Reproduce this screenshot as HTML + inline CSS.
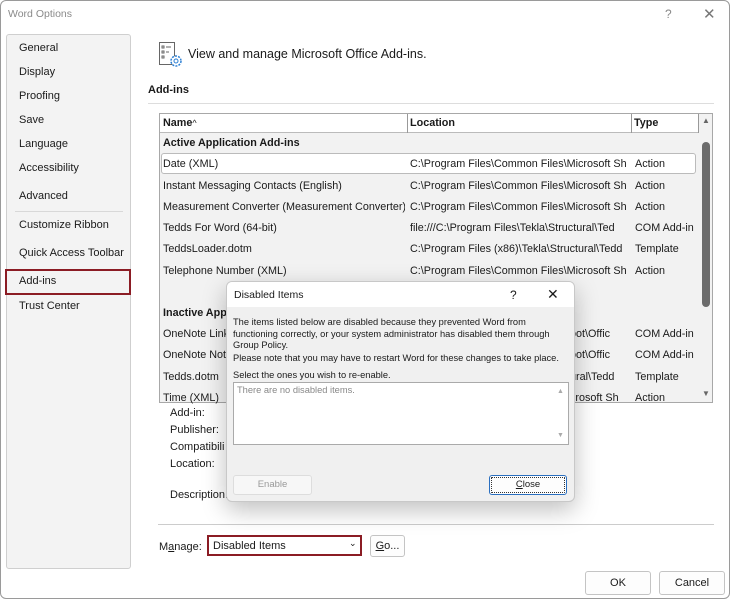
<!DOCTYPE html>
<html><head><style>
*{margin:0;padding:0;box-sizing:border-box}
body{width:730px;height:599px;background:#fff;font-family:"Liberation Sans",Arial,sans-serif;font-size:11px;color:#1a1a1a;position:relative;overflow:hidden}
.a{position:absolute;white-space:nowrap}
.win{position:absolute;left:0;top:0;width:730px;height:599px;border:1px solid #9a9a9a;border-radius:6px;background:#fff}
.nav{position:absolute;left:5px;top:33px;width:125px;height:535px;background:#f3f3f3;border:1px solid #cfcfcf;border-radius:3px}
.nav div{position:absolute;left:12px;font-size:11px}
.tbl{position:absolute;left:158px;top:112px;width:554px;height:290px;background:#f2f2f2;border:1px solid #a8a8a8;font-size:10.8px}
.l{width:220px;overflow:hidden}
.btn{position:absolute;background:#fdfdfd;border:1px solid #c4c4c4;border-radius:3px;text-align:center;font-size:11px}
</style></head><body>
<div class="win">
<div class="a" style="left:7px;top:7px;color:#8a8a8a;font-size:10.5px">Word Options</div>
<div class="a" style="left:664px;top:6px;color:#888;font-size:12px">?</div>
<div class="a" style="left:702px;top:4px;color:#777;font-size:15px">✕</div>
<div class="nav">
<div style="top:7px">General</div><div style="top:31px">Display</div><div style="top:55px">Proofing</div><div style="top:79px">Save</div><div style="top:103px">Language</div><div style="top:127px">Accessibility</div><div style="top:155px">Advanced</div>
<div style="top:176px;left:8px;width:108px;border-top:1px solid #d8d8d8"></div>
<div style="top:184px">Customize Ribbon</div><div style="top:212px">Quick Access Toolbar</div>
<div style="top:234px;left:-2px;width:126px;height:26px;border:2px solid #8b1c24;background:#f3f3f3"></div>
<div style="top:240px">Add-ins</div>
<div style="top:265px">Trust Center</div>
</div>
<svg class="a" style="left:157px;top:40px" width="26" height="28" viewBox="0 0 26 28"><rect x="1.5" y="1.5" width="15" height="22" fill="#fff" stroke="#666"/><g stroke="#666"><rect x="4" y="5" width="2" height="2" fill="none"/><line x1="8" y1="6" x2="13" y2="6"/><rect x="4" y="10" width="2" height="2" fill="none"/><line x1="8" y1="11" x2="11" y2="11"/><rect x="4" y="15" width="2" height="2" fill="none"/></g><circle cx="18" cy="20" r="5" fill="#fff" stroke="#2b7fd4" stroke-width="1.5" stroke-dasharray="2 1.2"/><circle cx="18" cy="20" r="2" fill="none" stroke="#2b7fd4"/></svg>
<div class="a" style="left:187px;top:46px;font-size:12.5px">View and manage Microsoft Office Add-ins.</div>
<div class="a" style="left:147px;top:83px;font-weight:bold;font-size:11px">Add-ins</div>
<div class="a" style="left:147px;top:102px;width:566px;border-top:1px solid #ddd"></div>
<div class="tbl">
<div class="a" style="left:0;top:0;width:538px;height:19px;background:#fff;border-bottom:1px solid #bbb"></div>
<div class="a" style="left:247px;top:0;height:19px;border-left:1px solid #999"></div>
<div class="a" style="left:471px;top:0;height:19px;border-left:1px solid #999"></div>
<div class="a" style="left:538px;top:0;height:19px;border-left:1px solid #999"></div>
<div class="a" style="left:3px;top:3px;font-weight:bold">Name<span style="font-weight:normal;font-size:9px">^</span></div>
<div class="a" style="left:250px;top:3px;font-weight:bold">Location</div>
<div class="a" style="left:474px;top:3px;font-weight:bold">Type</div>
<div class="a" style="left:542px;top:28px;width:8px;height:165px;background:#6c6c6c;border-radius:4px"></div>
<div class="a" style="left:542px;top:2px;font-size:8px;color:#666">▲</div>
<div class="a" style="left:542px;top:275px;font-size:8px;color:#666">▼</div>
<div class="a" style="left:1px;top:39px;width:535px;height:21px;background:#fff;border:1px solid #bbb;border-radius:3px"></div>
<div class="a" style="left:3px;top:23px;font-weight:bold">Active Application Add-ins</div>
<div class="a" style="left:3px;top:44px">Date (XML)</div><div class="a l" style="left:250px;top:44px">C:\Program Files\Common Files\Microsoft Sh</div><div class="a" style="left:475px;top:44px">Action</div>
<div class="a" style="left:3px;top:66px">Instant Messaging Contacts (English)</div><div class="a l" style="left:250px;top:66px">C:\Program Files\Common Files\Microsoft Sh</div><div class="a" style="left:475px;top:66px">Action</div>
<div class="a" style="left:3px;top:87px;width:242px;overflow:hidden">Measurement Converter (Measurement Converter)</div><div class="a l" style="left:250px;top:87px">C:\Program Files\Common Files\Microsoft Sh</div><div class="a" style="left:475px;top:87px">Action</div>
<div class="a" style="left:3px;top:108px">Tedds For Word (64-bit)</div><div class="a l" style="left:250px;top:108px">file:///C:\Program Files\Tekla\Structural\Ted</div><div class="a" style="left:475px;top:108px">COM Add-in</div>
<div class="a" style="left:3px;top:129px">TeddsLoader.dotm</div><div class="a l" style="left:250px;top:129px">C:\Program Files (x86)\Tekla\Structural\Tedd</div><div class="a" style="left:475px;top:129px">Template</div>
<div class="a" style="left:3px;top:151px">Telephone Number (XML)</div><div class="a l" style="left:250px;top:151px">C:\Program Files\Common Files\Microsoft Sh</div><div class="a" style="left:475px;top:151px">Action</div>
<div class="a" style="left:3px;top:193px;font-weight:bold">Inactive Appl</div>
<div class="a" style="left:3px;top:214px">OneNote Link</div><div class="a" style="left:410px;top:214px">oot\Offic</div><div class="a" style="left:475px;top:214px">COM Add-in</div>
<div class="a" style="left:3px;top:235px">OneNote Not</div><div class="a" style="left:410px;top:235px">oot\Offic</div><div class="a" style="left:475px;top:235px">COM Add-in</div>
<div class="a" style="left:3px;top:257px">Tedds.dotm</div><div class="a" style="left:410px;top:257px">ural\Tedd</div><div class="a" style="left:475px;top:257px">Template</div>
<div class="a" style="left:3px;top:278px">Time (XML)</div><div class="a" style="left:410px;top:278px">crosoft Sh</div><div class="a" style="left:475px;top:278px">Action</div>
</div>
<div class="a" style="left:169px;top:406px">Add-in:</div>
<div class="a" style="left:169px;top:423px">Publisher:</div>
<div class="a" style="left:169px;top:440px">Compatibili</div>
<div class="a" style="left:169px;top:457px">Location:</div>
<div class="a" style="left:169px;top:488px">Description:</div>
<div class="a" style="left:157px;top:523px;width:556px;border-top:1px solid #ccc"></div>
<div class="a" style="left:158px;top:540px">M<u>a</u>nage:</div>
<div class="a" style="left:206px;top:534px;width:155px;height:21px;border:2px solid #8b1c24;background:#fff"></div>
<div class="a" style="left:212px;top:539px">Disabled Items</div>
<div class="a" style="left:348px;top:537px;font-size:9px">⌄</div>
<div class="btn" style="left:369px;top:534px;width:35px;height:22px;line-height:20px"><u>G</u>o...</div>
<div class="btn" style="left:584px;top:570px;width:66px;height:24px;line-height:22px">OK</div>
<div class="btn" style="left:658px;top:570px;width:66px;height:24px;line-height:22px">Cancel</div>
</div>
<div class="a" style="left:226px;top:281px;width:349px;height:221px;background:#f0f0f0;border:1px solid #c8c8c8;border-radius:6px;box-shadow:0 8px 24px rgba(0,0,0,.25);overflow:hidden;font-size:9.3px">
<div class="a" style="left:0;top:0;width:349px;height:25px;background:#fff"></div>
<div class="a" style="left:7px;top:7px;font-size:10.5px">Disabled Items</div>
<div class="a" style="left:283px;top:6px;font-size:12px">?</div>
<div class="a" style="left:320px;top:4px;font-size:14px">✕</div>
<div class="a" style="left:6px;top:35px;line-height:11.5px;white-space:normal;width:340px">The items listed below are disabled because they prevented Word from functioning correctly, or your system administrator has disabled them through Group Policy.</div>
<div class="a" style="left:6px;top:71px">Please note that you may have to restart Word for these changes to take place.</div>
<div class="a" style="left:6px;top:88px">Select the ones you wish to re-enable.</div>
<div class="a" style="left:6px;top:100px;width:336px;height:63px;background:#fff;border:1px solid #aaa"></div>
<div class="a" style="left:10px;top:103px;color:#888">There are no disabled items.</div>
<div class="a" style="left:330px;top:106px;font-size:7px;color:#aaa">▲</div>
<div class="a" style="left:330px;top:150px;font-size:7px;color:#aaa">▼</div>
<div class="btn" style="left:6px;top:193px;width:79px;height:20px;line-height:18px;color:#999;background:#f7f7f7;border-color:#ddd;font-size:9.5px">Enable</div>
<div class="btn" style="left:262px;top:193px;width:78px;height:20px;line-height:18px;font-size:9.5px;border-color:#2a6fc0;outline:1px dotted #333;outline-offset:-3px"><u>C</u>lose</div>
</div>
</body></html>
